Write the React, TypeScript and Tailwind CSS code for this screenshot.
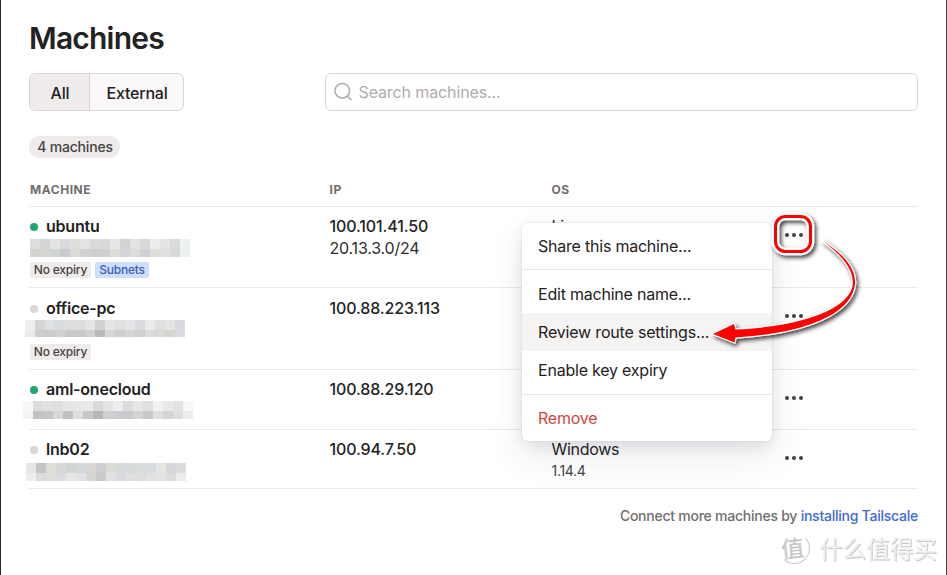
import type { ReactNode } from "react";

type Mosaic = { left: string; rows: { h: string; colors: string[] }[] };
type Machine = {
  name: string;
  online: boolean;
  ip: string;
  route?: string;
  os: string;
  version?: string;
  tags: string[];
  height: string;
  mosaic: Mosaic;
};

const machines: Machine[] = [
  {
    name: "ubuntu",
    online: true,
    ip: "100.101.41.50",
    route: "20.13.3.0/24",
    os: "Linux",
    tags: ["No expiry", "Subnets"],
    height: "h-[81px] pt-2",
    mosaic: {
      left: "ml-0 mt-px",
      rows: [
        { h: "h-[10px]", colors: ["#dedcdd", "#d3d6d5", "#e5e4e2", "#d8dadb", "#dfddd9", "#e1e3e5", "#dbdada", "#d9d8d8", "#e7e7e7", "#d1d2d5", "#e4e3e1", "#d8d8d9", "#ededee", "#e4e4e5", "#dbdadb", "#eef1f2"] },
        { h: "h-[8px]", colors: ["#d3d2d2", "#d8d6d0", "#d2d5d8", "#cacbcd", "#dcdbd8", "#cfd0d2", "#cdcecf", "#d0d0d0", "#dddcdb", "#d4d6da", "#dfdbda", "#d1d2d5", "#dfddd9", "#dfe1e0", "#d9d7d8", "#ecf2f2"] },
      ],
    },
  },
  {
    name: "office-pc",
    online: false,
    ip: "100.88.223.113",
    os: "Windows",
    tags: ["No expiry"],
    height: "h-[82px] pt-[9px]",
    mosaic: {
      left: "-ml-[5px] mt-0",
      rows: [
        { h: "h-[10px]", colors: ["#efeeed", "#d7d3d0", "#dce1e5", "#d9dbdd", "#dddedd", "#dcdddd", "#e6e5e3", "#d0d0d1", "#e2e4e7", "#e1dedb", "#e3e4e5", "#dadbde", "#ebebec", "#dedfe0", "#e5e4e2", "#d8dae0"] },
        { h: "h-[7px]", colors: ["#ebebea", "#cfcdcc", "#cbcbcb", "#d0d0ce", "#c8c9ca", "#c9c9c9", "#d2d1ce", "#b9b9b9", "#d5d7da", "#d1cecb", "#d5d5d6", "#cfcfd1", "#dbdbdd", "#dad9d8", "#d6d5cd", "#dadbe1"] },
      ],
    },
  },
  {
    name: "aml-onecloud",
    online: true,
    ip: "100.88.29.120",
    os: "Linux",
    tags: [],
    height: "h-[60px] pt-2",
    mosaic: {
      left: "-ml-[7px] mt-0",
      rows: [
        { h: "h-[10px]", colors: ["#f8f8f8", "#dddbde", "#e4e2e1", "#dedfe2", "#e6e7e5", "#e7e7e8", "#e9e9e8", "#dadadc", "#e3e3e4", "#ededf1", "#dcdcdd", "#e7e7e8", "#dfdfe0", "#f2f1f0", "#e7e8ea", "#e3e2e0", "#f8f8fc"] },
        { h: "h-[8px]", colors: ["#f4f3f2", "#c4c2c5", "#c6c5c5", "#d7d7d6", "#c0c0c4", "#dddfde", "#c7c7c6", "#b9b8b6", "#d2d0ce", "#cccdd2", "#cccac8", "#d4d4d4", "#c8c8c7", "#dedfe0", "#d3d3d3", "#dededd", "#ededed"] },
      ],
    },
  },
  {
    name: "lnb02",
    online: false,
    ip: "100.94.7.50",
    os: "Windows",
    version: "1.14.4",
    tags: [],
    height: "h-[59px] pt-2",
    mosaic: {
      left: "-ml-1 mt-[2px]",
      rows: [
        { h: "h-[10px]", colors: ["#e6e6e4", "#c5c3c4", "#deded9", "#d6d8d8", "#d3d5d2", "#d5d8da", "#dad8d5", "#cdced0", "#dcdbd5", "#d4d9dc", "#d8d9d9", "#d9dcdc", "#d8dbdf", "#e6e6e4", "#d5d7da", "#dadddc"] },
        { h: "h-[8px]", colors: ["#eeeeed", "#dbdcdd", "#dededc", "#dadce0", "#e5e7e5", "#e0e2e5", "#d6d5d3", "#cacbce", "#e1e1e1", "#d9dadd", "#dedfe0", "#dddddd", "#e1e1e4", "#e2e2e1", "#dcdddd", "#ececec"] },
      ],
    },
  },
];

function Redacted({ mosaic }: { mosaic: Mosaic }) {
  return (
    <div className={mosaic.left}>
      {mosaic.rows.map((row, i) => (
        <div key={i} className={`flex ${row.h}`}>
          {row.colors.map((c, j) => (
            <span key={j} className="w-[10px] shrink-0" style={{ backgroundColor: c }} />
          ))}
        </div>
      ))}
    </div>
  );
}

function Tag({ label }: { label: string }) {
  const tone = label === "Subnets" ? "w-[54px] bg-[#cedefd] text-[#3f5db3]" : "w-[61px] bg-[#efebea] text-[#444342]";
  return (
    <span className={`flex h-4 items-center justify-center rounded-[2px] text-[12px] font-[450] tracking-[-0.2px] ${tone}`}>
      {label}
    </span>
  );
}

function Dots() {
  return (
    <svg width="20" height="6" viewBox="0 0 20 6" className="fill-[#444342]">
      <circle cx="3" cy="3" r="2.05" />
      <circle cx="10" cy="3" r="2.05" />
      <circle cx="17" cy="3" r="2.05" />
    </svg>
  );
}

function Row({ m }: { m: Machine }) {
  return (
    <div className={`flex border-b border-[#ebeaea] ${m.height}`}>
      <div className="w-[300px] pl-px">
        <div className="flex h-[22px] items-center">
          <span className={`mt-px h-2 w-2 rounded-full ${m.online ? "bg-[#1ea672]" : "bg-[#d9d6d6]"}`} />
          <span className="ml-2 text-[16px] leading-[22px] font-semibold tracking-[-0.22px]">{m.name}</span>
        </div>
        <div className="h-[25px] pt-px">
          <Redacted mosaic={m.mosaic} />
        </div>
        <div className="flex gap-1">
          {m.tags.map((t) => (
            <Tag key={t} label={t} />
          ))}
        </div>
      </div>
      <div className="w-[222px] pl-[0.5px] text-[16px] leading-[22px] tracking-[-0.13px]">
        <div className="font-medium">{m.ip}</div>
        {m.route && <div className="tracking-[-0.2px] text-[#2e2d2d]">{m.route}</div>}
      </div>
      <div className="w-[233px] pl-[0.5px] text-[16px] leading-[22px] tracking-[-0.3px]">
        <div>{m.os}</div>
        {m.version && <div className="text-[14px] text-[#444342]">{m.version}</div>}
      </div>
      <div className={m.name === "office-pc" ? "pt-4" : "pt-[17px]"}>
        <Dots />
      </div>
    </div>
  );
}

function MenuItem({ children, className = "" }: { children: ReactNode; className?: string }) {
  return <div className={`flex h-[38px] items-center px-4 ${className}`}>{children}</div>;
}

function Menu() {
  return (
    <div className="absolute top-[223px] left-[522px] h-[218px] w-[250px] rounded-[6px] bg-white text-[16px] tracking-[-0.22px] shadow-[0_0_0_1px_rgba(136,152,170,0.1),0_15px_35px_0_rgba(49,49,93,0.1),0_5px_15px_0_rgba(0,0,0,0.08)]">
      <div className="h-[47px] border-b border-[#e9e8e8] pt-1">
        <MenuItem>Share this machine...</MenuItem>
      </div>
      <div className="h-[125px] border-b border-[#e9e8e8] pt-[5px]">
        <MenuItem>Edit machine name...</MenuItem>
        <MenuItem className="bg-[#f6f4f3] tracking-[-0.18px]">Review route settings...</MenuItem>
        <MenuItem>Enable key expiry</MenuItem>
      </div>
      <div className="pt-1">
        <MenuItem className="text-[#d04841]">Remove</MenuItem>
      </div>
    </div>
  );
}

function Annotation() {
  return (
    <svg className="absolute top-0 left-0" width="947" height="575" viewBox="0 0 947 575" fill="none">
      <defs>
        <filter id="drop" x="-20%" y="-20%" width="150%" height="150%">
          <feDropShadow dx="2" dy="2.5" stdDeviation="2" floodColor="#000" floodOpacity="0.75" />
        </filter>
      </defs>
      <g filter="url(#drop)">
        <rect x="775.5" y="216.5" width="35" height="35" rx="10" stroke="#fff" strokeWidth="7.5" />
        <rect x="775.5" y="216.5" width="35" height="35" rx="10" stroke="#ff0000" strokeWidth="3" />
      </g>
      <path
        filter="url(#drop)"
        d="M823 241C845 255 856 269 855 284C852 313 809 333 735.5 337.5L734.5 342.5L713 334L734 324L735.5 329.5C800 327 851 309 852.8 284C854 270 842 255 823 241Z"
        fill="#ff0000"
        stroke="#fff"
        strokeWidth="2.4"
        strokeLinejoin="round"
        paintOrder="stroke"
      />
    </svg>
  );
}

function Watermark() {
  return (
    <div className="absolute top-[533px] left-[779px] flex w-[165px] items-center font-['Noto_Sans_CJK_SC',sans-serif] whitespace-nowrap">
      <div className="flex h-[31px] w-[31px] shrink-0 items-center justify-center rounded-full border-[1.5px] border-t-transparent border-r-[#c9c9c9] border-b-[#c9c9c9] border-l-transparent">
        <span className="-translate-x-0.5 -translate-y-px -rotate-6 text-[23px] leading-none font-medium text-[#c8c8c8]">值</span>
      </div>
      <span className="-mt-0.5 ml-[9px] text-[23.6px] leading-[30px] text-[#f0f0f0] [text-shadow:1px_1px_0_#c8c8c8]">什么值得买</span>
    </div>
  );
}

export default function App() {
  return (
    <main className="relative h-[575px] w-[947px] overflow-hidden border-x border-l-[#2b2929] border-r-[#454545] bg-white pl-7 font-['Inter',sans-serif] text-[#232222]">
      <div className="w-[889px]">
        <h1 className="pt-[18px] text-[30px] leading-[40px] font-semibold tracking-[-0.78px]">Machines</h1>
        <div className="mt-[15px] flex justify-between">
          <div className="flex h-[38px] w-[155px] overflow-hidden rounded-[6px] border border-[#d9d6d6] bg-[#faf8f8] text-[16px] font-[450] tracking-[-0.2px]">
            <div className="flex w-[60px] items-center justify-center border-r border-[#d9d6d6] bg-[#efebeb] pt-[2px] pl-px">All</div>
            <div className="flex flex-1 items-center justify-center pt-[2px] pl-px">External</div>
          </div>
          <div className="flex h-[38px] w-[593px] items-center rounded-[6px] border border-[#d9d6d6] pl-2 text-[16px] text-[#afacab]">
            <svg width="20" height="20" viewBox="0 0 20 20" fill="none" stroke="#afacab" strokeWidth="1.5" strokeLinecap="round">
              <circle cx="8.3" cy="8.7" r="7.3" />
              <path d="m13.6 14.2 3.4 3.4" />
            </svg>
            <span className="ml-[4.5px] tracking-[-0.12px]">Search machines...</span>
          </div>
        </div>
        <div className="mt-[25px] flex h-[22px] w-[91px] items-center justify-center rounded-full bg-[#efebea] pb-px pl-px text-[14px] font-[450] tracking-[-0.18px] text-[#444342]">4 machines</div>
        <div className="mt-[21px] flex h-[28px] border-b border-[#e9e8e8] pl-px text-[12px] leading-[22px] font-bold tracking-[0.55px] text-[#706e6d]">
          <span className="w-[299.5px]">MACHINE</span>
          <span className="w-[222px]">IP</span>
          <span>OS</span>
        </div>
        {machines.map((m) => (
          <Row key={m.name} m={m} />
        ))}
        <p className="pt-[17px] text-right text-[14px] leading-[20px] font-[450] tracking-[-0.245px] text-[#706e6d]">
          Connect more machines by <a className="text-[#4069d5]">installing Tailscale</a>
        </p>
      </div>
      <div className="absolute top-0 -left-px h-[575px] w-[947px]">
        <Menu />
        <Annotation />
        <Watermark />
      </div>
    </main>
  );
}
